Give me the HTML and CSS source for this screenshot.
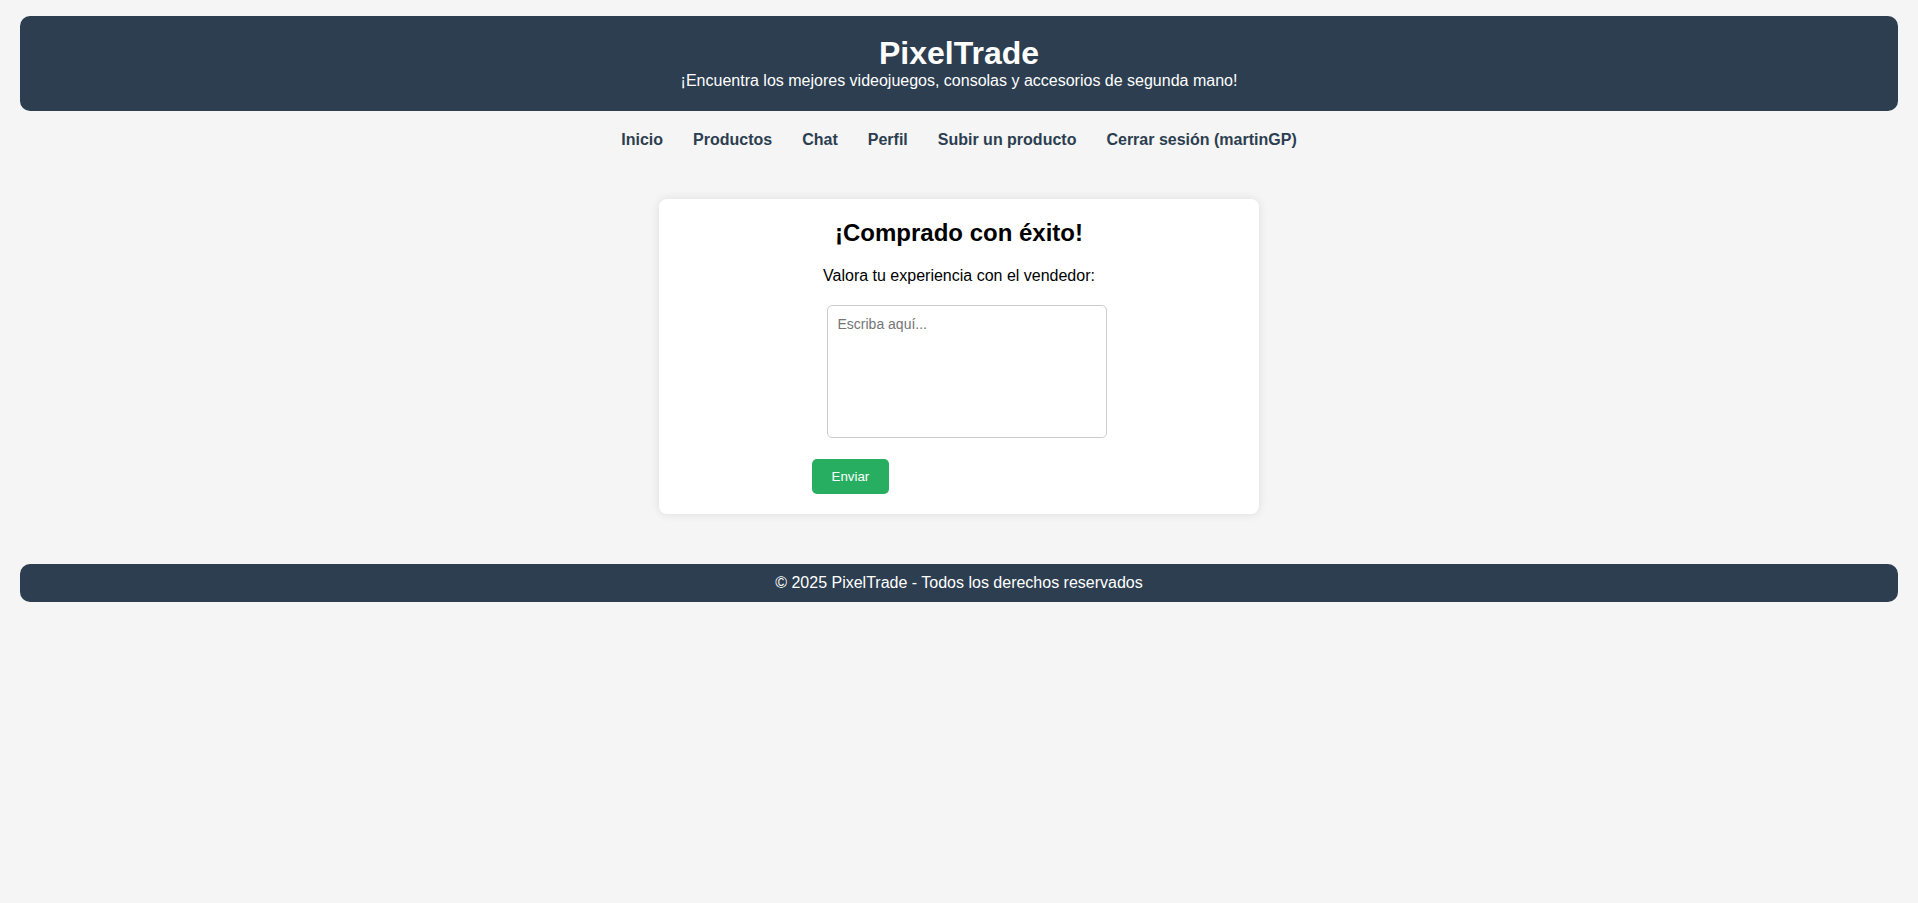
FILE: index.html
```html
<!DOCTYPE html>
<html lang="es">
<head>
<meta charset="utf-8">
<title>PixelTrade</title>
<link rel="stylesheet" href="styles.css">
</head>
<body>
<header class="site-header">
  <h1 class="site-title">PixelTrade</h1>
  <p class="site-tagline">¡Encuentra los mejores videojuegos, consolas y accesorios de segunda mano!</p>
</header>
<nav class="site-nav">
  <a href="#" class="nav-link">Inicio</a>
  <a href="#" class="nav-link">Productos</a>
  <a href="#" class="nav-link">Chat</a>
  <a href="#" class="nav-link">Perfil</a>
  <a href="#" class="nav-link">Subir un producto</a>
  <a href="#" class="nav-link">Cerrar sesión (martinGP)</a>
</nav>
<main class="site-main">
  <section class="card">
    <h2 class="card-title">¡Comprado con éxito!</h2>
    <p class="card-text">Valora tu experiencia con el vendedor:</p>
    <form class="rating-form">
      <textarea class="rating-input" placeholder="Escriba aquí..."></textarea>
      <button type="submit" class="btn-send">Enviar</button>
    </form>
  </section>
</main>
<footer class="site-footer">© 2025 PixelTrade - Todos los derechos reservados</footer>
</body>
</html>
```
FILE: styles.css
```css
html, body {
  background: #f5f5f5;
}
body {
  margin: 0;
  padding: 16px 20px;
  font-family: "Liberation Sans", Arial, sans-serif;
  color: #000;
}
.site-header {
  background: #2c3e50;
  color: #fff;
  text-align: center;
  padding: 19px 20px 21px;
  border-radius: 10px;
}
.site-title {
  margin: 0;
  font-size: 32px;
  font-weight: bold;
}
.site-tagline {
  margin: 0;
  font-size: 16px;
}
.site-nav {
  display: flex;
  justify-content: center;
  padding: 20px 0 16px;
}
.nav-link {
  color: #2c3e50;
  font-weight: bold;
  font-size: 16px;
  text-decoration: none;
  margin: 0 15px;
}
.site-main {
  padding: 34px 0 50px;
}
.card {
  box-sizing: border-box;
  width: 600px;
  margin: 0 auto;
  background: #fff;
  padding: 20px;
  border-radius: 8px;
  box-shadow: 0 0 10px rgba(0, 0, 0, 0.1);
  text-align: center;
}
.card-title {
  margin: 0 0 20px;
  font-size: 24px;
}
.card-text {
  margin: 0 0 20px;
  font-size: 16px;
}
.rating-form {
  width: fit-content;
  margin: 0 auto;
  text-align: left;
}
.rating-input {
  display: block;
  box-sizing: border-box;
  width: 280px;
  height: 133px;
  margin: 0 0 21px 15px;
  padding: 10px;
  border: 1px solid #ccc;
  border-radius: 5px;
  font-family: "Liberation Sans", Arial, sans-serif;
  font-size: 14px;
  resize: none;
}
.rating-input::placeholder {
  color: #757575;
}
.btn-send {
  display: block;
  background: #27ae60;
  color: #fff;
  border: none;
  border-radius: 5px;
  padding: 10px 20px;
  font-family: "Liberation Sans", Arial, sans-serif;
  font-size: 13.333px;
  cursor: pointer;
}
.site-footer {
  background: #2c3e50;
  color: #fff;
  text-align: center;
  padding: 10px;
  border-radius: 10px;
  font-size: 16px;
}
```
